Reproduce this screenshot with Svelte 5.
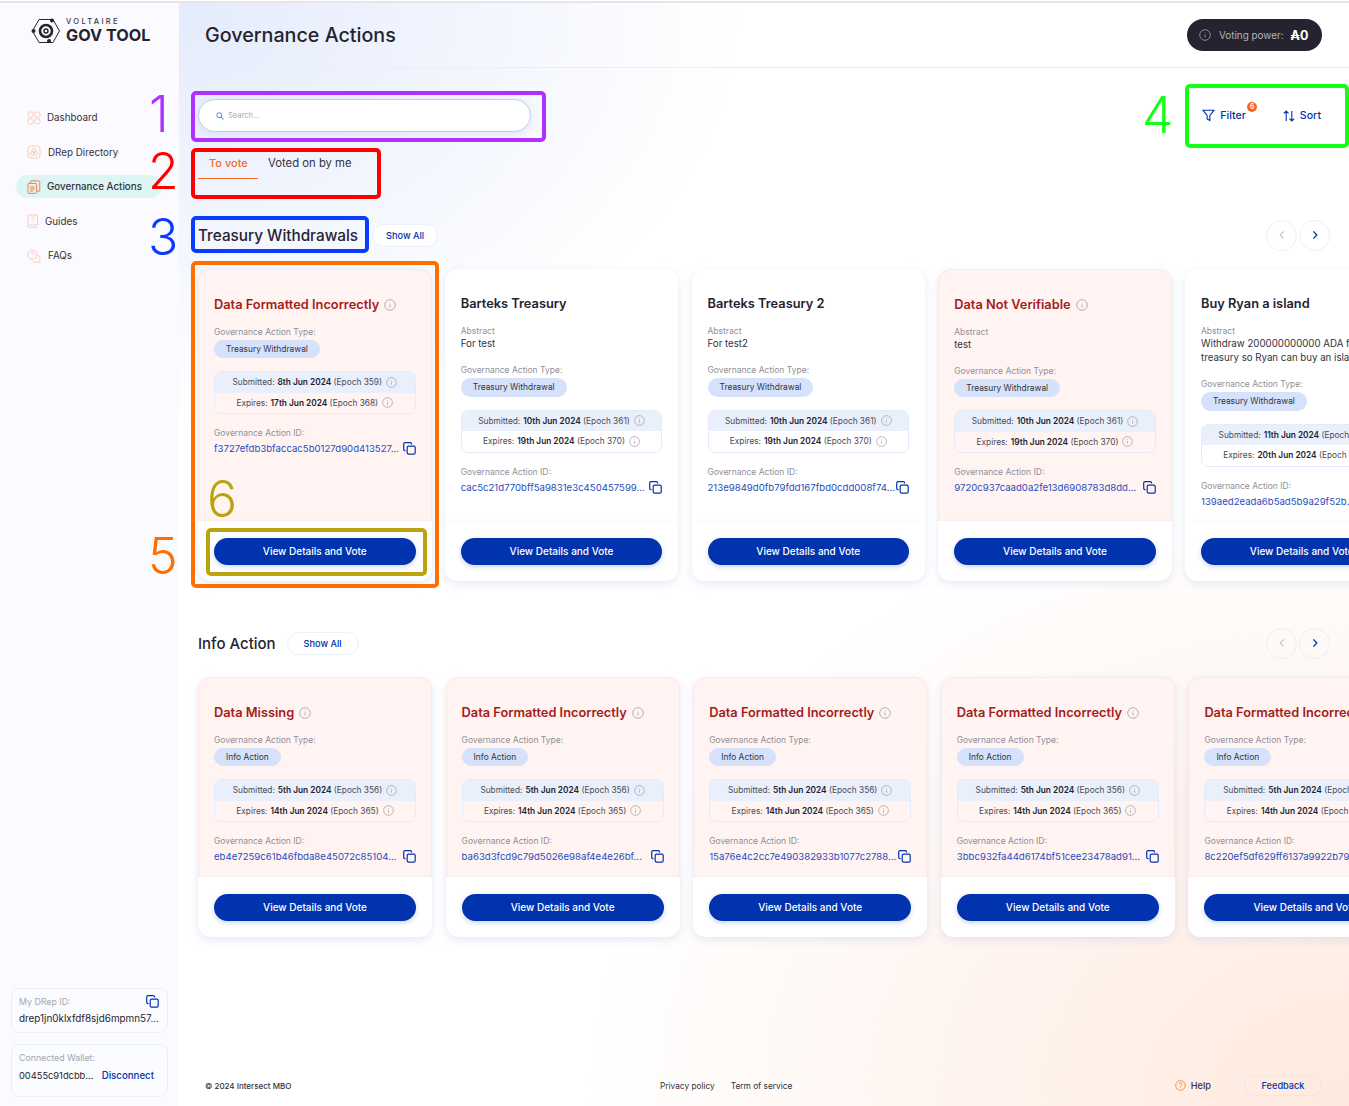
<script>
  const nav = [
    { label: 'Dashboard', icon: 'dash', cls: 'n1' },
    { label: 'DRep Directory', icon: 'drep', cls: 'n2' },
    { label: 'Governance Actions', icon: 'gov', cls: 'n3 active' },
    { label: 'Guides', icon: 'guide', cls: 'n4' },
    { label: 'FAQs', icon: 'faq', cls: 'n5' }
  ];
  const sections = [
    {
      title: 'Treasury Withdrawals', cls: 'treasury', type: 'Treasury Withdrawal',
      cards: [
        { title: 'Data Formatted Incorrectly', bad: true, sub: '8th Jun 2024', se: 359, exp: '17th Jun 2024', ee: 368, id: 'f3727efdb3bfaccac5b0127d90d413527...' },
        { title: 'Barteks Treasury', abstract: ['For test'], sub: '10th Jun 2024', se: 361, exp: '19th Jun 2024', ee: 370, id: 'cac5c21d770bff5a9831e3c450457599...' },
        { title: 'Barteks Treasury 2', abstract: ['For test2'], sub: '10th Jun 2024', se: 361, exp: '19th Jun 2024', ee: 370, id: '213e9849d0fb79fdd167fbd0cdd008f74...' },
        { title: 'Data Not Verifiable', bad: true, abstract: ['test'], sub: '10th Jun 2024', se: 361, exp: '19th Jun 2024', ee: 370, id: '9720c937caad0a2fe13d6908783d8dd...' },
        { title: 'Buy Ryan a island', abstract: ['Withdraw 200000000000 ADA from the', 'treasury so Ryan can buy an island'], sub: '11th Jun 2024', se: 362, exp: '20th Jun 2024', ee: 371, id: '139aed2eada6b5ad5b9a29f52b...' }
      ]
    },
    {
      title: 'Info Action', cls: 'infosec', type: 'Info Action',
      cards: [
        { title: 'Data Missing', id: 'eb4e7259c61b46fbda8e45072c85104...' },
        { title: 'Data Formatted Incorrectly', id: 'ba63d3fcd9c79d5026e98af4e4e26bf...' },
        { title: 'Data Formatted Incorrectly', id: '15a76e4c2cc7e490382933b1077c2788...' },
        { title: 'Data Formatted Incorrectly', id: '3bbc932fa44d6174bf51cee23478ad91...' },
        { title: 'Data Formatted Incorrectly', id: '8c220ef5df629ff6137a9922b794...' }
      ].map((c) => ({ ...c, bad: true, sub: '5th Jun 2024', se: 356, exp: '14th Jun 2024', ee: 365 }))
    }
  ];
  const marks = [
    { n: '1', cls: 'm1' }, { n: '2', cls: 'm2' }, { n: '3', cls: 'm3' },
    { n: '4', cls: 'm4' }, { n: '5', cls: 'm5' }, { n: '6', cls: 'm6' }
  ];
  const frames = ['f1', 'f2', 'f3', 'f4', 'f5', 'f6'];
</script>

{#snippet info(size = 11)}
  <svg class="iicon" width={size} height={size} viewBox="0 0 12 12" fill="none" stroke="currentColor" stroke-width="0.8">
    <circle cx="6" cy="6" r="5.3" /><path d="M6 5.4v3M6 3.4v.7" />
  </svg>
{/snippet}

{#snippet copy()}
  <svg class="copy" width="13" height="13" viewBox="0 0 13 13" fill="none" stroke="#0033ad" stroke-width="1.2">
    <rect x="4.2" y="4.2" width="8" height="8" rx="1.4" />
    <path d="M2.6 8.6H2A1.4 1.4 0 0 1 .7 7.2V2A1.4 1.4 0 0 1 2 .7h5.2a1.4 1.4 0 0 1 1.4 1.4v.5" />
  </svg>
{/snippet}

{#snippet navIcon(k)}
  <svg class="nicon" width="14" height="14" viewBox="0 0 14 14" fill="none" stroke="#f9a77f" stroke-width="0.9" opacity={k === 'gov' ? 1 : 0.6}>
    {#if k === 'dash'}
      <circle cx="3.6" cy="3.6" r="2.8" /><circle cx="10.4" cy="3.6" r="2.8" /><circle cx="3.6" cy="10.4" r="2.8" /><circle cx="10.4" cy="10.4" r="2.8" />
    {:else if k === 'drep'}
      <rect x="1" y="1" width="12" height="12" rx="3" /><circle cx="7" cy="5.6" r="2" /><circle cx="5.4" cy="8.4" r="2" /><circle cx="8.6" cy="8.4" r="2" />
    {:else if k === 'gov'}
      <g stroke="#f08040" stroke-width="1"><rect x="1" y="3.4" width="8.6" height="10" rx="1" /><path d="M3.4 3.2V1.9a1 1 0 0 1 1-1h7.4a1 1 0 0 1 1 1v8.4a1 1 0 0 1-1 1h-2" /><path d="M3 7h4.6M3 9h4.6M3 11h3" /></g>
    {:else if k === 'guide'}
      <path d="M2 1h9.6v10H3.2A1.3 1.3 0 0 0 2 12.4zM2 12.4A1.2 1.2 0 0 0 3.2 13.4h8.4" /><path d="M5.4 4.4a1.4 1.4 0 1 1 2 1.3c-.4.2-.6.5-.6 1M6.8 8.2v.5" />
    {:else}
      <circle cx="5.6" cy="5.6" r="4.6" /><path d="M9.6 5.8a4 4 0 0 1 2.6 6.6l.8.9H8.4a4 4 0 0 1-3.4-2" /><path d="M4.4 4.4a1.3 1.3 0 1 1 1.9 1.2c-.4.2-.6.5-.6.9M5.7 7.6v.4" />
    {/if}
  </svg>
{/snippet}

{#snippet card(c, type)}
  <article class="card" class:bad={c.bad}>
    <div class="body">
      <h3 class="ctitle">{c.title}{#if c.bad}{@render info(12)}{/if}</h3>
      {#if c.abstract}
        <div class="group">
          <div class="lab">Abstract</div>
          {#each c.abstract as line}<div class="val">{line}</div>{/each}
        </div>
      {/if}
      <div class="group">
        <div class="lab">Governance Action Type:</div>
        <div class="pill">{type}</div>
      </div>
      <div class="dates">
        <div class="d top">Submitted: <b>{c.sub}</b>&nbsp;(Epoch {c.se}){@render info(11)}</div>
        <div class="d">Expires: <b>{c.exp}</b>&nbsp;(Epoch {c.ee}){@render info(11)}</div>
      </div>
      <div class="group">
        <div class="lab">Governance Action ID:</div>
        <div class="idrow"><span class="idv">{c.id}</span>{@render copy()}</div>
      </div>
    </div>
    <div class="foot"><button class="vote">View Details and Vote</button></div>
  </article>
{/snippet}

<div class="page">
  <aside class="side">
    <div class="logo">
      <svg width="30" height="28" viewBox="0 0 30 28" fill="none" stroke="#24232f">
        <path d="M8 2.5h14l6.5 11.5L22 25.5H8L1.5 14z" stroke-width="1" />
        <circle cx="15" cy="14" r="6" stroke-width="2.6" />
        <circle cx="15" cy="14" r="2" stroke-width="1.4" />
        <circle cx="21" cy="3.5" r="2" fill="#24232f" stroke="none" />
        <circle cx="2.5" cy="14" r="2" fill="#24232f" stroke="none" />
        <circle cx="18" cy="24" r="2" fill="#24232f" stroke="none" />
      </svg>
      <div class="lt"><span class="lt1">VOLTAIRE</span><span class="lt2">GOV TOOL</span></div>
    </div>
    <nav class="nav">
      {#each nav as item}
        <div class="nitem {item.cls}">{@render navIcon(item.icon)}<span>{item.label}</span></div>
      {/each}
    </nav>
    <div class="sbottom">
      <div class="scard drepc">
        <div class="slab">My DRep ID:{@render copy()}</div>
        <div class="sval">drep1jn0klxfdf8sjd6mpmn57...</div>
      </div>
      <div class="scard walletc">
        <div class="slab">Connected Wallet:</div>
        <div class="srow"><span class="sval">00455c91dcbb...</span><span class="disc">Disconnect</span></div>
      </div>
    </div>
  </aside>

  <main class="main">
    <header class="head">
      <h1>Governance Actions</h1>
      <div class="power">
        <span class="pinfo">{@render info(12)}</span>
        <span class="ptxt">Voting power:</span>
        <span class="pval">₳0</span>
      </div>
    </header>

    <div class="toolbar">
      <div class="search">
        <svg width="8" height="8" viewBox="0 0 10 10" fill="none" stroke="#6f8fd8" stroke-width="1.3"><circle cx="4" cy="4" r="3" /><path d="M6.4 6.4 9.4 9.4" /></svg>
        <span>Search...</span>
      </div>
      <div class="tools">
        <div class="tool filter">
          <svg width="13" height="13" viewBox="0 0 13 13" fill="none" stroke="#0033ad" stroke-width="1.1"><path d="M.8 1.2h11.4L7.9 6.4v5.2L5.1 10V6.4z" stroke-linejoin="round" /></svg>
          <span>Filter</span><i class="badge">6</i>
        </div>
        <div class="tool">
          <svg width="12" height="12" viewBox="0 0 12 12" fill="none" stroke="#0033ad" stroke-width="1.1"><path d="M3.2 11V1M.8 3.4 3.2 1l2.4 2.4M8.8 1v10M6.4 8.6 8.8 11l2.4-2.4" /></svg>
          <span>Sort</span>
        </div>
      </div>
    </div>

    <div class="tabs">
      <div class="tab on">To vote</div>
      <div class="tab">Voted on by me</div>
    </div>

    {#each sections as s}
      <section class="sec {s.cls}">
        <div class="sechead">
          <h2>{s.title}</h2>
          <span class="showall">Show All</span>
          <div class="arrows">
            <span class="arrow off"><svg width="8" height="10" viewBox="0 0 8 10" fill="none" stroke="#c3c8dd" stroke-width="1.3"><path d="M5.6 1.4 2.2 5l3.4 3.6" /></svg></span>
            <span class="arrow"><svg width="8" height="10" viewBox="0 0 8 10" fill="none" stroke="#0033ad" stroke-width="1.3"><path d="M2.4 1.4 5.8 5 2.4 8.6" /></svg></span>
          </div>
        </div>
        <div class="row">
          {#each s.cards as c}{@render card(c, s.type)}{/each}
        </div>
      </section>
    {/each}

    <footer class="foot-bar">
      <span class="copyr">© 2024 Intersect MBO</span>
      <div class="links"><span>Privacy policy</span><span>Term of service</span></div>
      <div class="fright">
        <span class="help">
          <svg width="11" height="11" viewBox="0 0 12 12" fill="none" stroke="#f5843c" stroke-width="1"><circle cx="6" cy="6" r="5.2" /><path d="M4.5 4.7a1.5 1.5 0 1 1 2.2 1.3c-.5.3-.7.6-.7 1M6 8.2v.6" /></svg>
          Help
        </span>
        <span class="feedback">Feedback</span>
      </div>
    </footer>
  </main>

  {#each frames as f}<div class="frame {f}"></div>{/each}
  {#each marks as m}<div class="mark {m.cls}">{m.n}</div>{/each}
</div>

<style>
  :global(body) { margin: 0; background: #fff; }
  .page {
    position: relative;
    display: flex;
    width: 1349px;
    height: 1106px;
    overflow: hidden;
    box-sizing: border-box;
    border-top: 3px solid;
    border-image: linear-gradient(#fff 0 1px, #e6e6ea 1px) 3;
    font-family: Inter, "Noto Sans", sans-serif;
    color: #24232f;
    background:
      radial-gradient(560px 420px at 0% 0%, #e4ebfc 0%, rgba(228, 235, 252, 0) 100%) 179px 0 no-repeat,
      radial-gradient(760px 620px at 100% 100%, #ffe9de 0%, rgba(255, 238, 229, 0) 100%),
      #fff;
  }
  .side {
    width: 179px;
    flex: none;
    display: flex;
    flex-direction: column;
    background: #fafaff;
    box-sizing: border-box;
  }
  .logo { display: flex; align-items: center; gap: 5px; padding: 13px 0 0 31px; height: 29px; }
  .lt { display: flex; flex-direction: column; line-height: 1; }
  .lt1 { font-size: 7.5px; letter-spacing: 2.3px; font-weight: 500; color: #3a3a44; }
  .lt2 { font-size: 16.2px; font-weight: 700; margin-top: 1px; white-space: nowrap; }
  .nav { margin-top: 61px; display: flex; flex-direction: column; gap: 11.5px; padding: 0 17px 0 16px; }
  .nitem {
    height: 23px;
    display: flex;
    align-items: center;
    gap: 6px;
    padding-left: 11px;
    border-radius: 12px;
    font-size: 9.8px;
    color: #33323c;
    white-space: nowrap;
  }
  .nitem.active { background: #def5f5; font-weight: 500; }
  .n2 { gap: 7px; }
  .n4 { gap: 5px; padding-left: 10px; }
  .n5 { gap: 7px; }
  .sbottom { margin-top: auto; padding: 0 11px 9px; display: flex; flex-direction: column; gap: 11px; }
  .scard { border: 1px solid #e9effb; border-radius: 8px; background: #fbfcff; padding: 6px 8px 0 7px; height: 45px; box-sizing: border-box; }
  .walletc { height: 53px; }
  .slab { font-size: 8.8px; color: #a6a6ae; display: flex; justify-content: space-between; align-items: center; height: 13px; }
  .sval { font-size: 9.9px; color: #24232f; white-space: nowrap; line-height: 16px; }
  .drepc .sval { margin-top: 2px; }
  .srow { display: flex; justify-content: space-between; margin-top: 4px; }
  .srow .sval { font-size: 9.3px; }
  .disc { font-size: 9.7px; font-weight: 500; color: #0033ad; line-height: 16px; margin-right: 5px; }

  .main { flex: 1; min-width: 0; display: flex; flex-direction: column; }
  .head {
    height: 65px;
    flex: none;
    box-sizing: border-box;
    border-bottom: 1px solid #ebeef8;
    display: flex;
    align-items: center;
    justify-content: space-between;
    padding: 0 27px 0 26px;
  }
  h1 { font-size: 19.7px; font-weight: 500; margin: 0; color: #24232f; }
  .power {
    width: 135px; height: 32px; border-radius: 16px; background: #24232f; box-sizing: border-box;
    display: flex; align-items: center; padding-left: 12px; gap: 8px; white-space: nowrap;
  }
  .pinfo { color: #b8b8c0; display: flex; }
  .ptxt { font-size: 9.9px; color: #b4b4bc; }
  .pval { font-size: 12.5px; font-weight: 700; color: #fff; margin-left: -1px; }

  .toolbar { display: flex; justify-content: space-between; padding: 31px 0 0 19px; height: 33px; flex: none; }
  .search {
    width: 333px; height: 33px; box-sizing: border-box; background: #fff;
    border: 1px solid #bdcdf3; border-radius: 17px;
    display: flex; align-items: center; gap: 4px; padding-left: 17px;
    font-size: 7.5px; color: #a8a8b0;
    box-shadow: 0 2px 8px rgba(130, 150, 220, 0.2);
  }
  .tools { display: flex; margin-right: 28px; gap: 37px; height: 33px; align-items: center; }
  .tool { position: relative; display: flex; align-items: center; gap: 5px; font-size: 10.6px; font-weight: 500; color: #0033ad; }
  .badge {
    position: absolute; left: 45px; top: -7px; width: 10px; height: 10px; border-radius: 50%;
    background: #fa6418; color: #fff; font: 600 7px/10px Inter, sans-serif; text-align: center;
  }

  .tabs { display: flex; margin: 15px 0 0 19px; height: 32px; flex: none; align-items: flex-start; }
  .tab { font-size: 11.3px; height: 32px; line-height: 32px; color: #33323c; padding: 0 11px; white-space: nowrap; box-sizing: border-box; }
  .tab.on { color: #fa6a20; font-weight: 500; width: 60px; border-bottom: 1.5px solid #fa6a20; font-size: 11px; }
  .tab + .tab { padding-left: 10px; }

  .sec { flex: none; }
  .sechead { display: flex; align-items: center; height: 32px; padding: 0 19px; }
  .sec.treasury { margin-top: 40px; }
  .sec.infosec { margin-top: 46px; }
  h2 { font-size: 15.3px; font-weight: 500; margin: 0; white-space: nowrap; }
  .infosec h2 { font-size: 15px; }
  .showall {
    margin-left: 14px; height: 23px; box-sizing: border-box; border: 1px solid #e9effb; border-radius: 12px;
    background: #fff; padding: 0 13px; font-size: 9.2px; font-weight: 500; color: #0033ad;
    display: flex; align-items: center; white-space: nowrap;
  }
  .infosec .showall { margin-left: 11px; padding: 0 16px; }
  .arrows { margin-left: auto; display: flex; gap: 2px; }
  .arrow {
    width: 31px; height: 31px; box-sizing: border-box; border: 1px solid #e9effb; border-radius: 50%;
    display: flex; align-items: center; justify-content: center;
  }
  .row { display: flex; align-items: stretch; padding: 18px 0 0 19px; }
  .treasury .row { gap: 13.25px; }
  .infosec .row { gap: 13.6px; }
  .treasury .card { flex: 0 0 233.5px; height: 312px; }
  .infosec .card { flex: 0 0 234px; height: 260px; }

  .card {
    display: flex; flex-direction: column; box-sizing: border-box;
    border-radius: 13px; background: #fff; overflow: hidden;
    box-shadow: 0 3px 10px rgba(140, 160, 225, 0.22);
  }
  .card.bad { background: #fff4f2; box-shadow: 0 3px 10px rgba(140, 160, 225, 0.22), inset 0 0 0 1px #fbe9e6; }
  .body { flex: 1; padding: 25px 16px 0; min-height: 0; }
  .bad .body { padding-top: 25.5px; }
  .ctitle { margin: 0; font-size: 12.8px; line-height: 20px; font-weight: 600; color: #24232f; display: flex; align-items: center; gap: 5px; white-space: nowrap; }
  .bad .ctitle { color: #a51b1b; }
  .iicon { color: #9f9fa8; flex: none; }
  .group { margin-top: 11px; }
  .group + .group { margin-top: 13px; }
  .lab { font-size: 8.5px; line-height: 12px; color: #8f8f98; white-space: nowrap; }
  .val { font-size: 9.7px; line-height: 14px; color: #33323c; white-space: nowrap; }
  .pill {
    width: fit-content; margin-top: 2px; height: 18.5px; line-height: 18.5px; padding: 0 12px;
    border-radius: 10px; background: #d6e2fb; font-size: 8.4px; color: #33323c; white-space: nowrap;
  }
  .dates { margin-top: 13px; border: 1px solid #e4ebfa; border-radius: 7px; overflow: hidden; }
  .dates + .group { margin-top: 13px; }
  .d { height: 20.5px; display: flex; align-items: center; justify-content: center; font-size: 8.3px; color: #4b4b55; white-space: nowrap; }
  .d b { font-weight: 600; color: #24232f; margin-left: 3px; }
  .d :global(svg) { margin-left: 4px; }
  .d.top { background: #e9effb; }
  .idrow { display: flex; align-items: center; justify-content: space-between; margin-top: 2px; height: 15px; }
  .idv { font-size: 9.6px; color: #1f4dbd; white-space: nowrap; }
  .copy { flex: none; }
  .foot {
    flex: none; height: 60px; background: #fff; box-sizing: border-box; padding: 16.5px 16px 0;
    box-shadow: 0 -1px 2px rgba(150, 165, 220, 0.08);
  }
  .vote {
    width: 100%; height: 27px; border: 0; border-radius: 14px; background: #0033ad; color: #fff;
    font: 500 10px Inter, sans-serif; padding: 0; white-space: nowrap;
    box-shadow: 0 2px 5px rgba(0, 51, 173, 0.2);
  }

  .foot-bar {
    margin-top: auto; height: 21px; margin-bottom: 10px; display: flex; align-items: center;
    padding: 0 27px 0 26px; font-size: 8.3px; color: #33323c; position: relative; white-space: nowrap; flex: none;
  }
  .copyr { font-weight: 500; font-size: 8px; }
  .links { position: absolute; left: 481px; display: flex; gap: 16px; }
  .fright { margin-left: auto; display: flex; align-items: center; gap: 33px; }
  .help { display: flex; align-items: center; gap: 5px; font-size: 9.2px; font-weight: 500; }
  .feedback {
    width: 78px; height: 21px; box-sizing: border-box; border: 1px solid #e3e9f9; border-radius: 11px;
    display: flex; align-items: center; justify-content: center; font-size: 9.2px; font-weight: 500; color: #0033ad;
  }

  .frame { position: absolute; box-sizing: border-box; border: 4px solid; border-radius: 5px; pointer-events: none; }
  .f1 { left: 191px; top: 88px; width: 355px; height: 51px; border-color: #b030ff; }
  .f2 { left: 191px; top: 145px; width: 190px; height: 51px; border-color: #ff0000; }
  .f3 { left: 191px; top: 213px; width: 178px; height: 37px; border-color: #0a3cff; }
  .f4 { left: 1185px; top: 81px; width: 164px; height: 64px; border-color: #14ff14; }
  .f5 { left: 191px; top: 258px; width: 248px; height: 327px; border-color: #ff6f00; }
  .f6 { left: 206px; top: 525px; width: 221px; height: 48px; border-color: #bba310; }
  .mark { position: absolute; font: 300 50px/50px Inter, "Liberation Sans", sans-serif; }
  .m1 { left: 149px; top: 86px; color: #b030ff; }
  .m2 { left: 148px; top: 143px; color: #ff0000; }
  .m3 { left: 148px; top: 209px; color: #0a3cff; }
  .m4 { left: 1142px; top: 87px; color: #14ff14; }
  .m5 { left: 148px; top: 528px; color: #ff6f00; }
  .m6 { left: 207px; top: 471px; color: #bba310; }
</style>
